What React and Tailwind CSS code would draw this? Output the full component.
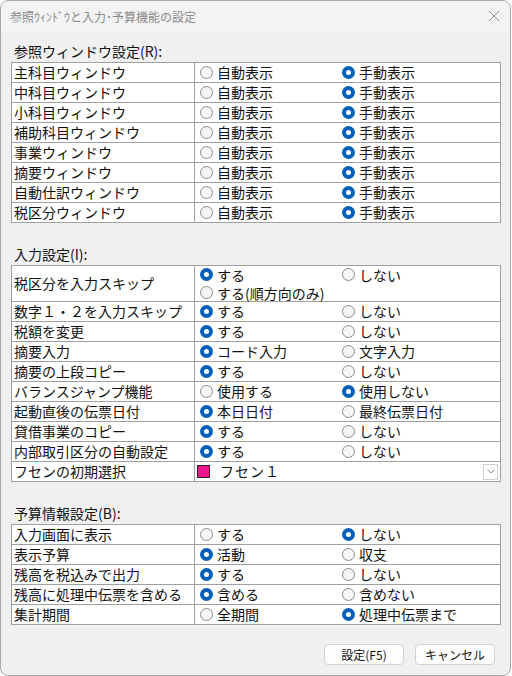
import React from "react";

function Radio({ checked }) {
  if (checked) {
    return (
      <span className="flex h-[13px] w-[13px] shrink-0 items-center justify-center rounded-full bg-[#005fb8]">
        <span className="h-[5px] w-[5px] rounded-full bg-white" />
      </span>
    );
  }
  return (
    <span className="h-[13px] w-[13px] shrink-0 rounded-full border border-[#8b8b8b] bg-[#f5f5f5]" />
  );
}

function Opt({ label, checked }) {
  return (
    <div className="flex items-center gap-[4px]">
      <Radio checked={checked} />
      <span className="whitespace-nowrap">{label}</span>
    </div>
  );
}

function Row({ label, a, b, sel, tall, children }) {
  return (
    <div className={"flex border-b border-[#a0a0a0] " + (tall ? "h-[36px]" : "h-[20px]")}>
      <div className="flex w-[183px] shrink-0 items-center border-r border-[#a0a0a0] pl-[2px]">
        <span className="whitespace-nowrap">{label}</span>
      </div>
      <div className="flex min-w-0 flex-1 flex-col justify-center">
        {children ? (
          children
        ) : (
          <div className="grid grid-cols-[142px_1fr] pl-[5px]">
            <Opt label={a} checked={sel === 0} />
            <Opt label={b} checked={sel === 1} />
          </div>
        )}
      </div>
    </div>
  );
}

function Table({ children }) {
  return (
    <div className="border-x border-t border-[#a0a0a0] bg-white">{children}</div>
  );
}

function SectionLabel({ children }) {
  return <div className="flex h-[21px] items-center pl-[3px]">{children}</div>;
}

const sec1 = [
  "主科目ウィンドウ",
  "中科目ウィンドウ",
  "小科目ウィンドウ",
  "補助科目ウィンドウ",
  "事業ウィンドウ",
  "摘要ウィンドウ",
  "自動仕訳ウィンドウ",
  "税区分ウィンドウ",
];

const sec2 = [
  ["数字１・２を入力スキップ", "する", "しない", 0],
  ["税額を変更", "する", "しない", 0],
  ["摘要入力", "コード入力", "文字入力", 0],
  ["摘要の上段コピー", "する", "しない", 0],
  ["バランスジャンプ機能", "使用する", "使用しない", 1],
  ["起動直後の伝票日付", "本日日付", "最終伝票日付", 0],
  ["貸借事業のコピー", "する", "しない", 0],
  ["内部取引区分の自動設定", "する", "しない", 0],
];

const sec3 = [
  ["入力画面に表示", "する", "しない", 1],
  ["表示予算", "活動", "収支", 0],
  ["残高を税込みで出力", "する", "しない", 0],
  ["残高に処理中伝票を含める", "含める", "含めない", 0],
  ["集計期間", "全期間", "処理中伝票まで", 1],
];

function SmallOpt({ label, checked }) {
  return (
    <div className="flex h-[18px] items-center gap-[4px] overflow-hidden">
      <Radio checked={checked} />
      <span className="block h-[18px] overflow-visible whitespace-nowrap text-[14px] leading-[18px]">{label}</span>
    </div>
  );
}

export default function App() {
  return (
    <div className="h-[676px] w-[512px] bg-white font-['Noto_Sans_CJK_JP','Noto_Sans',sans-serif] text-[14px] leading-[19px] text-[#111]">
      <div className="flex h-[676px] w-[511px] flex-col overflow-hidden rounded-[8px] border border-[#a8a8a8] bg-[#f0f0f0]">
        <div className="flex h-[31px] shrink-0 items-center justify-between bg-[#f3f3f3] pl-[9px] pr-[9px]">
          <span className="text-[12px] leading-[16px] text-[#8a8a8a]">参照ｳｨﾝﾄﾞｳと入力･予算機能の設定</span>
          <svg width="12" height="12" viewBox="0 0 12 12" className="mr-[1px] mt-[-1px]">
            <path d="M1 1 L11 11 M11 1 L1 11" stroke="#8a8a8a" strokeWidth="1" fill="none" />
          </svg>
        </div>
        <div className="flex flex-1 flex-col pl-[10px] pr-[9px] pt-[9px]">
          <SectionLabel>参照ウィンドウ設定(R):</SectionLabel>
          <Table>
            {sec1.map((n) => (
              <Row key={n} label={n} a="自動表示" b="手動表示" sel={1} />
            ))}
          </Table>
          <div className="h-[21px]" />
          <SectionLabel>入力設定(I):</SectionLabel>
          <Table>
            <Row label="税区分を入力スキップ" tall>
              <div className="flex flex-col pl-[5px]">
                <div className="grid h-[18px] grid-cols-[142px_1fr]">
                  <SmallOpt label="する" checked />
                  <SmallOpt label="しない" checked={false} />
                </div>
                <SmallOpt label="する(順方向のみ)" checked={false} />
              </div>
            </Row>
            {sec2.map(([l, a, b, s]) => (
              <Row key={l} label={l} a={a} b={b} sel={s} />
            ))}
            <Row label="フセンの初期選択">
              <div className="flex h-[19px] items-center pl-[2px] pr-[2px]">
                <span className="h-[13px] w-[13px] shrink-0 border border-[#222] bg-[#f0148c]" />
                <span className="ml-[10px] flex-1 tracking-[1px]">フセン１</span>
                <span className="flex h-[16px] w-[15px] items-center justify-center border border-[#d0d0d0] bg-white">
                  <svg width="8" height="5" viewBox="0 0 8 5">
                    <path d="M0.5 0.5 L4 4 L7.5 0.5" stroke="#8a8a8a" strokeWidth="1" fill="none" />
                  </svg>
                </span>
              </div>
            </Row>
          </Table>
          <div className="h-[21px]" />
          <SectionLabel>予算情報設定(B):</SectionLabel>
          <Table>
            {sec3.map(([l, a, b, s]) => (
              <Row key={l} label={l} a={a} b={b} sel={s} />
            ))}
          </Table>
          <div className="mt-[19px] flex justify-end gap-[11px] pr-[6px]">
            <button className="flex h-[21px] w-[80px] items-center justify-center rounded-[4px] border border-[#d0d0d0] bg-[#fdfdfd] text-[12px] leading-[16px] text-[#111]">
              設定(F5)
            </button>
            <button className="flex h-[21px] w-[80px] items-center justify-center rounded-[4px] border border-[#d0d0d0] bg-[#fdfdfd] text-[12px] leading-[16px] text-[#111]">
              キャンセル
            </button>
          </div>
        </div>
      </div>
    </div>
  );
}
